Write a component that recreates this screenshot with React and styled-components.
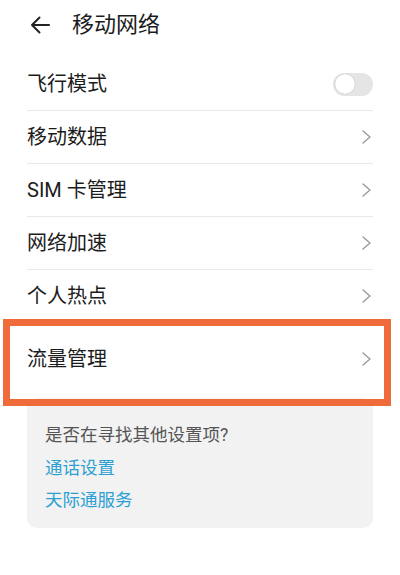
import styled, { createGlobalStyle } from 'styled-components'

const GlobalStyle = createGlobalStyle`
    * {
        box-sizing: border-box;
    }
    body {
        margin: 0;
        background: #ffffff;
        font-family: Roboto, "Noto Sans CJK SC", sans-serif;
        color: #1c1c1c;
    }
`

const Page = styled.div`
    width: 400px;
    min-height: 575px;
    background: #ffffff;
    overflow: hidden;
`

const Header = styled.header`
    height: 50px;
    display: flex;
    align-items: center;
    gap: 22px;
    padding-left: 30px;
`

const Title = styled.h1`
    margin: 0;
    font-size: 22px;
    font-weight: 400;
    line-height: 1;
`

const List = styled.ul`
    list-style: none;
    margin: 0;
    padding: 8px 27px 0;
`

const Row = styled.li`
    position: relative;
    height: ${(props) => props.height ?? '53px'};
    display: flex;
    align-items: center;
    justify-content: space-between;
    border-bottom: ${(props) => (props.last ? 'none' : '1px solid #e9e9e9')};
    font-size: 20px;
    line-height: 1;

    ${(props) =>
        props.highlight &&
        `
        &::after {
            content: '';
            position: absolute;
            top: -4px;
            left: -24px;
            right: -18px;
            bottom: -11px;
            border: 7px solid #ef6c3a;
            z-index: 1;
            pointer-events: none;
        }
    `}
`

const Track = styled.span`
    position: relative;
    width: 40px;
    height: 23px;
    border-radius: 12px;
    background: #e5e5e5;
`

const Knob = styled.span`
    position: absolute;
    top: 1.5px;
    left: 1.5px;
    width: 20px;
    height: 20px;
    border-radius: 50%;
    background: #ffffff;
    box-shadow: 0 0 1px rgba(0, 0, 0, 0.35);
`

const Chevron = styled.svg`
    width: 9px;
    height: 14px;
    margin-right: 2px;
`

const Card = styled.section`
    margin: 3px 27px 0;
    padding: 25px 18px 16px;
    background: #f2f2f2;
    border-radius: 10px;
    display: flex;
    flex-direction: column;
    gap: 8.5px;
`

const Hint = styled.p`
    margin: 0;
    font-size: 17.5px;
    line-height: 24px;
    color: #555555;
`

const Link = styled.a`
    font-size: 17.5px;
    line-height: 24px;
    color: #2e9fd2;
    text-decoration: none;
`

function BackArrow() {
    return (
        <svg width="20" height="18" viewBox="0 0 20 18" fill="none">
            <path d="M19 9H2M9.5 1.5L2 9l7.5 7.5" stroke="#222" strokeWidth="2" strokeLinecap="round" strokeLinejoin="round" />
        </svg>
    )
}

function Arrow() {
    return (
        <Chevron viewBox="0 0 9 14" fill="none">
            <path d="M1 1l7 6-7 6" stroke="#9a9a9a" strokeWidth="1.4" strokeLinecap="round" strokeLinejoin="round" />
        </Chevron>
    )
}

const items = ['移动数据', 'SIM 卡管理', '网络加速', '个人热点']

function App() {
    return (
        <Page>
            <GlobalStyle />
            <Header>
                <BackArrow />
                <Title>移动网络</Title>
            </Header>
            <List>
                <Row>
                    <span>飞行模式</span>
                    <Track>
                        <Knob />
                    </Track>
                </Row>
                {items.map((label) => (
                    <Row key={label}>
                        <span>{label}</span>
                        <Arrow />
                    </Row>
                ))}
                <Row last highlight height="72px">
                    <span>流量管理</span>
                    <Arrow />
                </Row>
            </List>
            <Card>
                <Hint>是否在寻找其他设置项?</Hint>
                <Link href="#">通话设置</Link>
                <Link href="#">天际通服务</Link>
            </Card>
        </Page>
    )
}

export default App
